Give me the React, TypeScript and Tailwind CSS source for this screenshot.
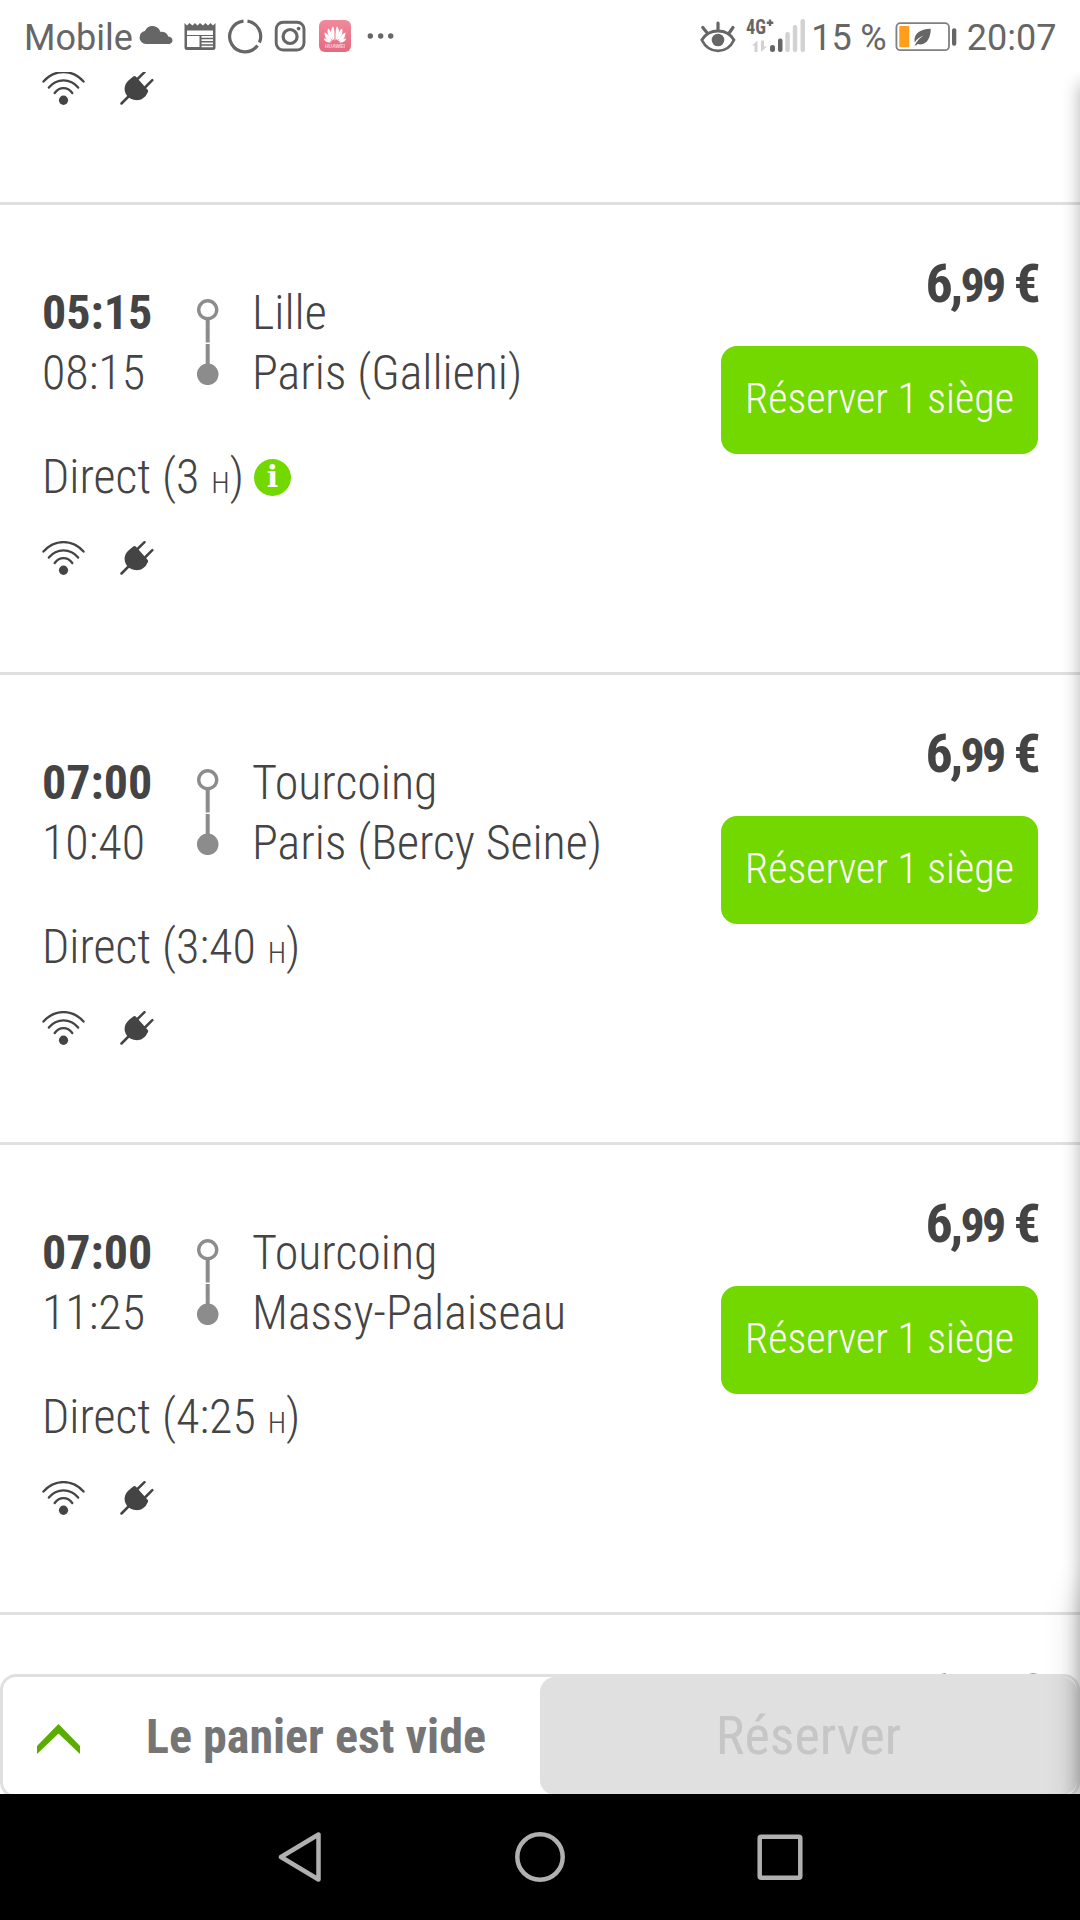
interface Trip {
  departure: string;
  arrival: string;
  from: string;
  to: string;
  duration: string;
  info?: boolean;
}

const TRIPS: Trip[] = [
  { departure: "05:15", arrival: "08:15", from: "Lille", to: "Paris (Gallieni)", duration: "3", info: true },
  { departure: "07:00", arrival: "10:40", from: "Tourcoing", to: "Paris (Bercy Seine)", duration: "3:40" },
  { departure: "07:00", arrival: "11:25", from: "Tourcoing", to: "Massy-Palaiseau", duration: "4:25" },
];

function LeftStatusIcons() {
  return (
    <div className="flex gap-[9px] text-[#666]">
      <svg viewBox="0 0 36 36" className="size-9 overflow-visible" fill="currentColor">
        <path
          transform="translate(1 0)"
          d="M8 26a6.600 6.600 0 0 1-1-13.100C8.500 9 12 7.600 15 8C19 8.300 21.500 11 22.500 14C26.500 13 29.500 15.500 30.200 18.600C33.500 18.800 34.500 21 34.500 22.600C34.500 25 32.500 26 31 26Z"
        />
      </svg>
      <svg viewBox="0 0 36 36" className="size-9" fill="currentColor">
        <path
          fillRule="evenodd"
          d="M2.500 5l2.500 2.500L7.500 5l3 2.500L13 5l2.500 2.500L18 5l3 2.500L23.500 5l2.500 2.500L28.500 5l2.500 2.500L33.500 5v24.500a2.500 2.500 0 0 1-2.500 2.500H5a2.500 2.500 0 0 1-2.500-2.500z M5 12.500v4.500h26v-4.500z M5 18v11h12.500V18z M19.500 18v1.800H31V18z M19.500 21.300v1.800H31v-1.800z M19.500 24.600v1.600H31v-1.600z M19.500 27.700v1.500H31v-1.500z"
        />
      </svg>
      <svg viewBox="0 0 36 36" className="size-9" fill="none" stroke="currentColor" strokeWidth="3.200">
        <path d="M20.500 3.100A15.400 15.400 0 0 1 32.400 24.500" />
        <path d="M30.500 27.500A15.400 15.400 0 1 1 16.500 3.100" />
      </svg>
      <svg viewBox="0 0 36 36" className="size-9" fill="none" stroke="currentColor" strokeWidth="2.900">
        <rect x="4.200" y="4.200" width="27.800" height="27.800" rx="7" />
        <circle cx="18.100" cy="18.500" r="7" strokeWidth="3.200" />
        <circle cx="26.600" cy="10.600" r="1.900" fill="currentColor" stroke="none" />
      </svg>
      <svg viewBox="0 0 36 36" className="size-9">
        <defs>
          <linearGradient id="huawei" x1="0" y1="0" x2="0" y2="1">
            <stop offset="0" stopColor="#f0899c" />
            <stop offset="1" stopColor="#e6687f" />
          </linearGradient>
        </defs>
        <rect x="2" y="2" width="32" height="32" rx="6" fill="url(#huawei)" />
        <g fill="#fff">
          <path d="M17.300 22.500C13.500 18 13 12 16 8.200c1.500 2 1.800 9 1.300 14.300z" />
          <path d="M18.700 22.500C22.500 18 23 12 20 8.200c-1.500 2-1.800 9-1.300 14.300z" />
          <path d="M16 22.600C12 20 9.500 15.500 11 10.600c2.800 1.500 4.500 7 5 12z" />
          <path d="M20 22.600c4-2.600 6.500-7.100 5-12-2.800 1.500-4.500 7-5 12z" />
          <path d="M14.800 23.200C10.500 23 7.300 19.500 7.600 14.500c3.200 1.300 6 5 7.200 8.700z" />
          <path d="M21.200 23.200c4.300-.2 7.500-3.700 7.200-8.700-3.200 1.300-6 5-7.200 8.700z" />
          <path d="M14 24.300c-3 1-6.200-.6-7.300-3.800 3-.2 5.500 1.500 7.300 3.800z" />
          <path d="M22 24.300c3 1 6.200-.6 7.300-3.800-3-.2-5.500 1.500-7.300 3.800z" />
        </g>
        <text x="18" y="29.500" textAnchor="middle" textLength="20" fill="#fbd5dc" className="font-['Liberation_Sans',sans-serif] text-[5px] font-bold">
          HUAWEI
        </text>
      </svg>
      <svg viewBox="0 0 36 36" className="size-9" fill="currentColor">
        <circle cx="8.300" cy="18" r="2.700" />
        <circle cx="18.700" cy="18" r="2.700" />
        <circle cx="28.700" cy="18" r="2.700" />
      </svg>
    </div>
  );
}

function EyeIcon() {
  return (
    <svg viewBox="0 0 36 36" className="size-9" fill="none" stroke="currentColor" strokeWidth="3.200" strokeLinecap="round">
      <path d="M1.800 22C9 10 27 10 34 22C27 36.500 9 36.500 1.800 22Z" strokeWidth="2.800" />
      <circle cx="18" cy="22" r="6.300" fill="currentColor" stroke="none" />
      <path d="M18 5v7M2.800 9.500l4 5M33 9.500l-3.500 5" />
    </svg>
  );
}

function SignalIcon() {
  return (
    <svg viewBox="0 0 60 36" className="h-9 w-[60px] overflow-visible" fill="#d2d2d2">
      <text x="0" y="15.800" textLength="20" lengthAdjust="spacingAndGlyphs" fill="#666" className="font-['Roboto_Condensed',sans-serif] text-[20px] font-bold">
        4G
      </text>
      <path d="M24 1.500v6.400M20.700 4.700h6.600" stroke="#666" strokeWidth="2.400" />
      <path d="M11.500 22.500v11.500h-3v-6.500H6z M15 22.500v11.500l6-5.500h-3v-6z" />
      <rect x="24" y="27" width="5" height="7" rx="2.500" fill="#666" />
      <rect x="32" y="20.500" width="4.500" height="13.500" rx="2" fill="#666" />
      <rect x="39.300" y="14" width="4.500" height="20" rx="2" />
      <rect x="46.800" y="7" width="4.500" height="27" rx="2" />
      <rect x="54.500" y="1" width="4.500" height="33" rx="2" />
    </svg>
  );
}

function BatteryIcon() {
  return (
    <svg viewBox="0 0 62 36" className="h-9 w-[62px]" fill="#666">
      <rect x="1.400" y="5.200" width="52.600" height="27" rx="4" fill="none" stroke="#808080" strokeWidth="1.800" />
      <rect x="4.300" y="8" width="10" height="21.300" rx="1" fill="#ff9e1b" />
      <path d="M19.800 24.500C18 16 25 11 35.700 10.800c.3 8.500-4.200 17.700-13.200 15.200l-1.300 1.600-1.500-.3c2-4 5-7.500 9-9.800-4 1.300-6.800 3.500-8.900 7z" />
      <rect x="57" y="10.300" width="4.300" height="17.400" rx="2" />
    </svg>
  );
}

function StatusBar() {
  return (
    <header className="flex h-[72px] shrink-0 items-center pl-6 pr-[23.5px] font-['Roboto',sans-serif] text-[36px] leading-none text-[#666]">
      <span className="w-[113px] pt-[3px]">Mobile</span>
      <LeftStatusIcons />
      <div className="ml-auto flex items-center">
        <EyeIcon />
        <span className="ml-[10px]">
          <SignalIcon />
        </span>
        <span className="ml-[5px] w-[84px] whitespace-nowrap pt-[3px] tracking-[-0.2px]">15 %</span>
        <BatteryIcon />
        <span className="ml-[9.5px] pt-[3px]">20:07</span>
      </div>
    </header>
  );
}

function ServiceIcons() {
  return (
    <div className="flex gap-[35px] text-[#444]">
      <svg viewBox="0 0 44 34" preserveAspectRatio="none" className="h-[34px] w-[43px]" fill="none" stroke="currentColor" strokeWidth="2.400" strokeLinecap="round">
        <path d="M1.500 10.500C13-2 31-2 42.500 10.500" />
        <path d="M7 16.500C15 7 29 7 37 16.500" />
        <path d="M13 22C18 15.500 26 15.500 31 22" />
        <circle cx="22" cy="29.200" r="4.700" fill="currentColor" stroke="none" />
      </svg>
      <svg viewBox="0 0 34 34" className="size-[34px]" fill="none" stroke="currentColor" strokeWidth="2.500" strokeLinecap="round">
        <path d="M1.500 32.500L8 26M17.500 8L24.500 1.200M25 16.500L32.300 9.200" />
        <path
          d="M13.300 5.500Q14.800 4.500 16 5.800L28 19.200Q28.600 21 27.300 22C25 27.500 20 29.800 15 29C9 28 5 24 4.600 18.500C4.500 12.500 8 9.500 13.300 5.500Z"
          fill="currentColor"
          stroke="none"
        />
      </svg>
    </div>
  );
}

function RouteLine() {
  return (
    <svg viewBox="0 0 22 86" className="h-[86px] w-[22px]" fill="none" stroke="#8c8c8c">
      <circle cx="10.700" cy="10.800" r="9" strokeWidth="3.400" fill="#fff" />
      <path d="M10.700 20v23.500M10.700 45v22" strokeWidth="4" />
      <circle cx="10.700" cy="75.300" r="10.800" fill="#8c8c8c" stroke="none" />
    </svg>
  );
}

function Price() {
  return (
    <p className="whitespace-nowrap text-[54px] font-bold leading-[60px] tracking-[-2.7px]">
      6,<span className="text-[48px] leading-none">99</span> €
    </p>
  );
}

function TripCard({ trip }: { trip: Trip }) {
  return (
    <li className="flex h-[470px] shrink-0 justify-between border-b-[3px] border-[#e0e0e0] px-[42px]">
      <div className="pt-[78px]">
        <div className="flex">
          <div className="w-[155px]">
            <p className="font-bold">{trip.departure}</p>
            <p>{trip.arrival}</p>
          </div>
          <div className="w-[55px] pt-4">
            <RouteLine />
          </div>
          <div>
            <p>{trip.from}</p>
            <p>{trip.to}</p>
          </div>
        </div>
        <div className="mt-11 flex items-center">
          <p>
            Direct ({trip.duration} <span className="ml-px text-[30px] leading-none">H</span>)
          </p>
          {trip.info && (
            <span className="ml-2.5 flex size-[37px] items-center justify-center rounded-full bg-[#73d700] font-['DejaVu_Serif',serif] text-[30px] font-bold leading-none text-white">
              i
            </span>
          )}
        </div>
        <div className="mt-[34px]">
          <ServiceIcons />
        </div>
      </div>
      <div className="flex flex-col items-end pt-[49px]">
        <Price />
        <button className="mt-8 h-[108px] w-[317px] rounded-2xl bg-[#73d700] pb-0.5 text-[42px] font-light text-white">
          Réserver 1 siège
        </button>
      </div>
    </li>
  );
}

function CartBar() {
  return (
    <div className="absolute inset-x-0 bottom-0 h-[120px] overflow-hidden">
      <div className="flex h-[124px] rounded-2xl border-[3px] border-[#e0e0e0] bg-white">
        <button className="flex w-[537px] items-center pl-[34px] text-[48px] font-bold text-[#757575]">
          <svg viewBox="0 0 43 30" className="mt-[5px] h-[30px] w-[43px]" fill="#5aac00">
            <path d="M21.500 0L43 22v8L21.500 9.500L0 30v-8z" />
          </svg>
          <span className="ml-[66px] pt-px">Le panier est vide</span>
        </button>
        <button className="flex-1 rounded-[15px] bg-[#e0e0e0] text-[54px] font-normal text-[#c6c6c6]">
          Réserver
        </button>
      </div>
    </div>
  );
}

function NavBar() {
  return (
    <nav className="flex h-[126px] shrink-0 items-center justify-center gap-[190px] bg-black">
      <svg viewBox="0 0 50 50" className="size-[50px]" fill="none" stroke="#b0b0b0" strokeWidth="4.500" strokeLinejoin="round">
        <path d="M43.500 2.500v45L6 25z" />
      </svg>
      <svg viewBox="0 0 50 50" className="size-[50px]" fill="none" stroke="#b0b0b0" strokeWidth="4.500">
        <circle cx="25" cy="25" r="22.700" />
      </svg>
      <svg viewBox="0 0 50 50" className="size-[50px]" fill="none" stroke="#b0b0b0" strokeWidth="4.500">
        <rect x="4.700" y="4.700" width="40.600" height="41" rx="1.500" />
      </svg>
    </nav>
  );
}

export default function App() {
  return (
    <div className="flex h-[1920px] w-[1080px] flex-col overflow-hidden bg-white">
      <StatusBar />
      <main className="relative flex-1 overflow-hidden font-['Roboto_Condensed','Roboto',sans-serif] text-[48px] font-light leading-[60px] text-[#444]">
        <ul className="flex flex-col">
          <li className="h-[133px] shrink-0 border-b-[3px] border-[#e0e0e0] pl-[42px]">
            <div className="-mt-px">
              <ServiceIcons />
            </div>
          </li>
          {TRIPS.map((trip) => (
            <TripCard key={trip.departure + trip.arrival} trip={trip} />
          ))}
          <li className="flex shrink-0 justify-end px-[42px] pt-[49px]">
            <Price />
          </li>
        </ul>
        <CartBar />
        {/* side drawers just off the right edge, only their shadows show */}
        <div className="pointer-events-none absolute -bottom-5 left-full top-3 w-10 shadow-[0_0_18px_rgba(0,0,0,0.3)]" />
        <div className="pointer-events-none absolute -bottom-5 left-full top-[1520px] w-10 shadow-[0_0_36px_rgba(0,0,0,0.2)]" />
      </main>
      <NavBar />
    </div>
  );
}
